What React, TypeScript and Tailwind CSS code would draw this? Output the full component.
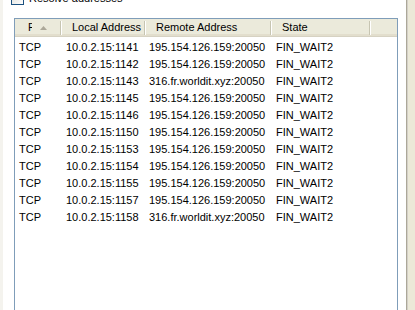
import React from "react";

const rows: [string, string, string, string][] = [
  ["TCP", "10.0.2.15:1141", "195.154.126.159:20050", "FIN_WAIT2"],
  ["TCP", "10.0.2.15:1142", "195.154.126.159:20050", "FIN_WAIT2"],
  ["TCP", "10.0.2.15:1143", "316.fr.worldit.xyz:20050", "FIN_WAIT2"],
  ["TCP", "10.0.2.15:1145", "195.154.126.159:20050", "FIN_WAIT2"],
  ["TCP", "10.0.2.15:1146", "195.154.126.159:20050", "FIN_WAIT2"],
  ["TCP", "10.0.2.15:1150", "195.154.126.159:20050", "FIN_WAIT2"],
  ["TCP", "10.0.2.15:1153", "195.154.126.159:20050", "FIN_WAIT2"],
  ["TCP", "10.0.2.15:1154", "195.154.126.159:20050", "FIN_WAIT2"],
  ["TCP", "10.0.2.15:1155", "195.154.126.159:20050", "FIN_WAIT2"],
  ["TCP", "10.0.2.15:1157", "195.154.126.159:20050", "FIN_WAIT2"],
  ["TCP", "10.0.2.15:1158", "316.fr.worldit.xyz:20050", "FIN_WAIT2"],
];

function Sep() {
  return (
    <div className="flex h-[14px] self-center shrink-0">
      <div className="w-px h-full bg-[#c7c5b2]" />
      <div className="w-px h-full bg-white" />
    </div>
  );
}

export default function App() {
  return (
    <div
      className="w-[415px] h-[310px] overflow-hidden bg-[#ece9d8] flex text-[11px] text-black"
      style={{ fontFamily: '"Liberation Sans", Arial, sans-serif' }}
    >
      <div className="w-[407px] h-full shrink-0 bg-white border-l-[3px] border-l-[#f4f3ee] border-r border-r-[#aca899] flex flex-col">
        {/* checkbox row */}
        <div className="flex items-center h-[13px] mt-[-8px] pl-[8px] gap-[5px] leading-none">
          <div className="w-[13px] h-[13px] border border-[#1c5180] bg-gradient-to-br from-[#dcdcd7] to-white shrink-0" />
          <span>Resolve addresses</span>
        </div>
        {/* list view */}
        <div className="ml-[11px] mt-[13px] w-[384px] flex-1 border border-[#7f9db9] border-b-0 bg-white flex flex-col">
          <div className="h-[18px] flex bg-[#ebeadb] border-b border-b-[#d6d2c2] shadow-[inset_0_-2px_0_#e2decd] shrink-0">
            <div className="w-[47px] flex items-center pl-[13px] shrink-0">
              <span className="w-[4px] overflow-hidden whitespace-nowrap">P</span>
              <svg width="7" height="4" viewBox="0 0 7 4" className="ml-[8px] mt-[1px]">
                <polygon points="3.5,0 7,4 0,4" fill="#aca899" />
              </svg>
              <div className="flex-1" />
              <Sep />
            </div>
            <div className="w-[84px] flex items-center shrink-0">
              <span className="pl-[10px] flex-1 whitespace-nowrap">Local Address</span>
              <Sep />
            </div>
            <div className="w-[126px] flex items-center shrink-0">
              <span className="pl-[10px] flex-1 whitespace-nowrap">Remote Address</span>
              <Sep />
            </div>
            <div className="w-[99px] flex items-center shrink-0">
              <span className="pl-[10px] flex-1 whitespace-nowrap">State</span>
              <Sep />
            </div>
            <div className="flex-1" />
          </div>
          <div className="pt-[2px]">
            {rows.map((r, i) => (
              <div key={i} className="h-[17px] flex items-center whitespace-nowrap">
                <div className="w-[47px] pl-[4px] shrink-0">{r[0]}</div>
                <div className="w-[83px] pl-[4px] shrink-0">{r[1]}</div>
                <div className="w-[127px] pl-[4px] shrink-0">{r[2]}</div>
                <div className="pl-[4px]">{r[3]}</div>
              </div>
            ))}
          </div>
        </div>
      </div>
      <div className="flex-1 border-l border-l-[#d4d0c8]" />
    </div>
  );
}
